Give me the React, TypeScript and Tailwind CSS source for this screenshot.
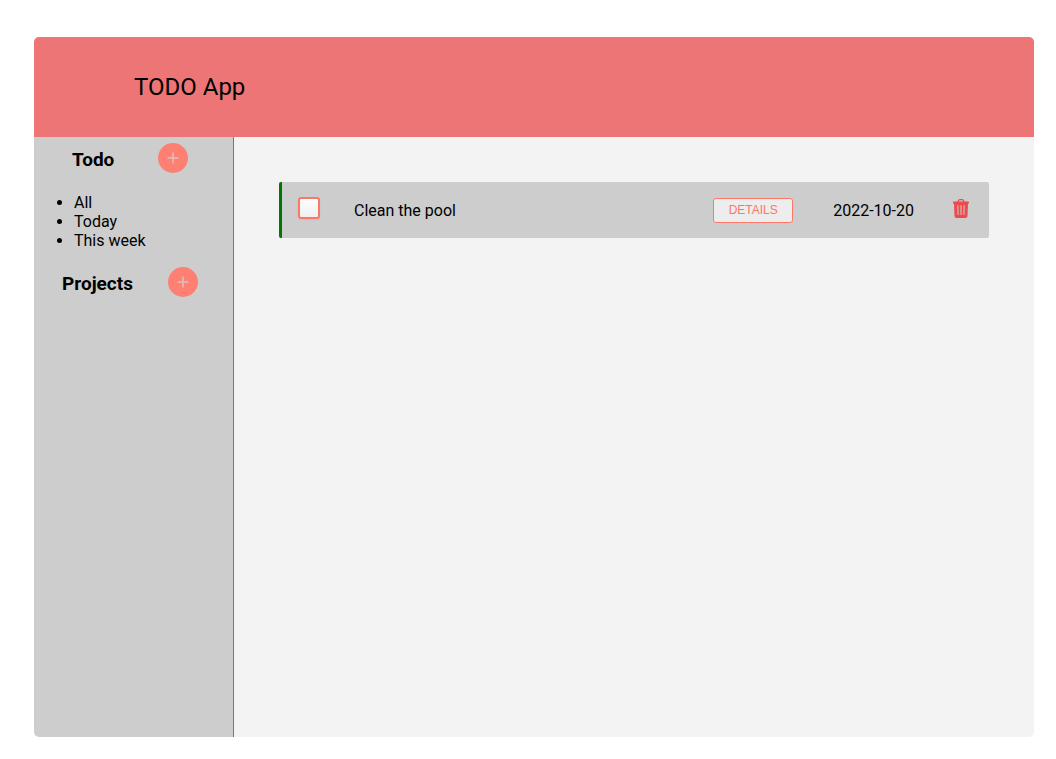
import { useState } from "react";

type Task = { id: number; title: string; date: string };

const filters = ["All", "Today", "This week"];

function AddButton({ label }: { label: string }) {
  return (
    <button
      type="button"
      aria-label={label}
      className="flex size-[30px] shrink-0 items-center justify-center rounded-full bg-[#fd8072]"
    >
      <svg viewBox="0 0 12 12" className="size-3" fill="none" stroke="#dcc0bc" strokeWidth="1.5">
        <path d="M6 0.5V11.5M0.5 6H11.5" />
      </svg>
    </button>
  );
}

function TrashIcon() {
  return (
    <svg viewBox="0 0 16 19" className="h-[19px] w-4" fill="none">
      <path
        fill="#ec4a4c"
        fillRule="evenodd"
        d="M4.6 2.5C4.6 1.1 5.600 0 7 0h2c1.400 0 2.400 1.100 2.400 2.500H15.200c.4 0 .8.300.8.800V4.500H15L14.500 17c-.1 1.200-.9 2-2 2H3.500c-1.100 0-1.900-.8-2-2L1 4.500H0V3.300c0-.5.4-.8.8-.8H4.600ZM6 2.500h4c0-.7-.4-1.200-1.100-1.200H7.100C6.400 1.300 6 1.800 6 2.500Z"
      />
      <path stroke="#d5b9b9" strokeWidth="1.2" d="M4.800 6.200 5.100 16M8 6.200V16M11.200 6.200 10.900 16" />
    </svg>
  );
}

function TaskRow({ task }: { task: Task }) {
  const [done, setDone] = useState(false);
  return (
    <li className="flex h-14 items-center rounded-xs border-l-3 border-[#007800] bg-[#cdcdcd] pr-5 pl-4">
      <input
        id={`task-${task.id}`}
        type="checkbox"
        checked={done}
        onChange={() => setDone(!done)}
        className="mb-1 size-[22px] shrink-0 appearance-none rounded-[3px] border-2 border-[#fd7768] bg-linear-to-b from-[#fefefe] to-[#f0f0f0] shadow-xs checked:from-[#fd7768] checked:to-[#fd7768]"
      />
      <label htmlFor={`task-${task.id}`} className="ml-[34px] grow">
        {task.title}
      </label>
      <button
        type="button"
        className="h-[25px] w-20 rounded-[3px] border border-[#fd7768] bg-[#ededed] font-['Liberation_Sans',Arial,sans-serif] text-[12px] leading-none text-[#fd7768]"
      >
        DETAILS
      </button>
      <time dateTime={task.date} className="ml-10">
        {task.date}
      </time>
      <button type="button" aria-label="Delete task" className="mb-1 ml-[39px]">
        <TrashIcon />
      </button>
    </li>
  );
}

export default function App() {
  const tasks: Task[] = [{ id: 1, title: "Clean the pool", date: "2022-10-20" }];
  return (
    <div className="flex min-h-screen bg-white pt-[37px] pr-[22px] pb-[22px] pl-[34px] font-[Roboto,sans-serif] text-[16px] leading-[19px] text-black">
      <div className="flex grow flex-col overflow-hidden rounded-[5px]">
        <header className="flex h-[100px] items-center bg-[#ee7576] pl-[100px]">
          <h1 className="text-[24px] leading-7">TODO App</h1>
        </header>
        <div className="flex grow">
          <aside className="w-[200px] shrink-0 border-r border-[#777777] bg-[#cdcdcd] pt-1.5">
            <div className="flex items-center justify-between pr-[45px] pl-[38px]">
              <h2 className="pt-1 text-[19px] leading-[22px] font-bold">Todo</h2>
              <AddButton label="Add todo" />
            </div>
            <ul className="mt-5 list-disc pl-10">
              {filters.map((name) => (
                <li key={name}>
                  <a href="#">{name}</a>
                </li>
              ))}
            </ul>
            <div className="mt-[17px] flex items-center justify-between pr-[35px] pl-7">
              <h2 className="pt-1 text-[19px] leading-[22px] font-bold">Projects</h2>
              <AddButton label="Add project" />
            </div>
          </aside>
          <main className="grow bg-[#f3f3f3] p-[45px]">
            <ul>
              {tasks.map((task) => (
                <TaskRow key={task.id} task={task} />
              ))}
            </ul>
          </main>
        </div>
      </div>
    </div>
  );
}
